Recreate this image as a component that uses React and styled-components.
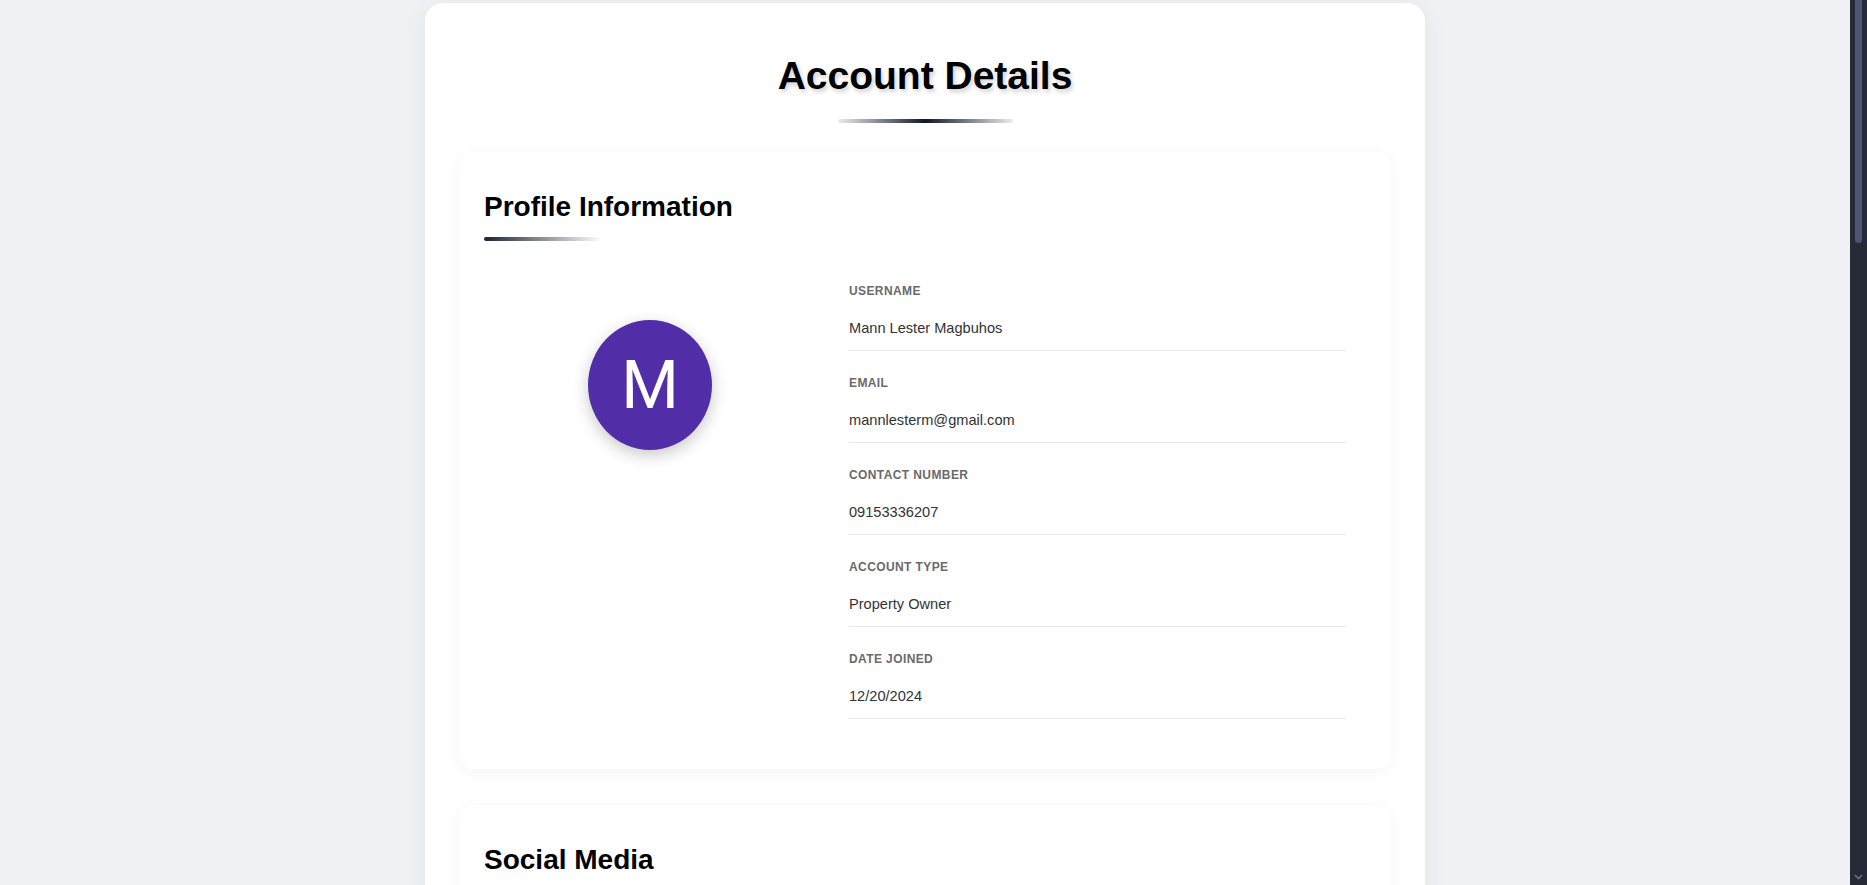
import React from 'react';
import styled, { createGlobalStyle } from 'styled-components';

const GlobalStyle = createGlobalStyle`
  html, body {
    margin: 0;
    padding: 0;
    background: #eff1f5;
    font-family: "Liberation Sans", Arial, sans-serif;
    overflow: hidden;
  }
`;

const Layout = styled.div`
  display: flex;
  height: 100vh;
`;

const Viewport = styled.main`
  flex: 1;
  overflow: hidden;
  padding-top: 3px;
`;

const ScrollTrack = styled.aside`
  width: 17px;
  flex: 0 0 17px;
  background: #262a37;
  display: flex;
  flex-direction: column;
  align-items: center;
  justify-content: space-between;
`;

const ScrollThumb = styled.div`
  width: 7px;
  height: 243px;
  border-radius: 0 0 4px 4px;
  background: #4f5572;
`;

const ScrollArrow = styled.svg`
  width: 9px;
  height: 6px;
  margin-bottom: 5px;
`;

const Container = styled.div`
  width: 1000px;
  margin: 0 auto;
  box-sizing: border-box;
  background: #ffffff;
  border-radius: 18px;
  box-shadow: 0 4px 24px rgba(0, 0, 0, 0.06);
  padding: 49px 34px 40px;
`;

const Title = styled.h1`
  margin: 0;
  text-align: center;
  font-size: 39px;
  line-height: 48px;
  font-weight: 700;
  color: #000;
  text-shadow: 2px 3px 4px rgba(0, 0, 0, 0.18);
`;

const TitleBar = styled.div`
  width: 175px;
  height: 4px;
  margin: 19px auto 29px;
  border-radius: 2px;
  background: linear-gradient(90deg, rgba(15, 23, 42, 0.08), #0f172a 50%, rgba(15, 23, 42, 0.08));
`;

const Section = styled.section`
  background: #ffffff;
  border-radius: 14px;
  box-shadow: 0 3px 16px rgba(0, 0, 0, 0.045);
  padding: 38px 45px 25px 25px;
  & + & {
    margin-top: 36px;
  }
`;

const SectionTitle = styled.h2`
  margin: 0;
  font-size: 28px;
  line-height: 34px;
  font-weight: 700;
  color: #000;
`;

const SectionBar = styled.div`
  width: 118px;
  height: 4px;
  margin-top: 13px;
  border-radius: 2px;
  background: linear-gradient(90deg, #1c2333, rgba(28, 35, 51, 0));
`;

const ProfileGrid = styled.div`
  display: grid;
  grid-template-columns: 332px 1fr;
  column-gap: 33px;
  margin-top: 43px;
`;

const AvatarColumn = styled.div`
  display: flex;
  justify-content: center;
  align-items: flex-start;
  padding-top: 36px;
`;

const Avatar = styled.div`
  width: 124px;
  height: 130px;
  border-radius: 50%;
  background: #512da8;
  color: #ffffff;
  display: flex;
  align-items: center;
  justify-content: center;
  font-family: Roboto, "Liberation Sans", sans-serif;
  font-size: 66px;
  font-weight: 400;
  box-shadow: 0 5px 16px rgba(0, 0, 0, 0.22);
`;

const Fields = styled.div`
  display: flex;
  flex-direction: column;
`;

const Field = styled.div`
  padding-bottom: 12px;
  margin-bottom: 25px;
  border-bottom: 1px solid #e9e9ec;
`;

const Label = styled.div`
  font-size: 12px;
  line-height: 14px;
  font-weight: 700;
  letter-spacing: 0.4px;
  text-transform: uppercase;
  color: #6a6a6a;
`;

const Value = styled.div`
  margin-top: 20px;
  font-size: 14.6px;
  line-height: 20px;
  color: #333333;
`;

const profile = [
  { label: 'Username', value: 'Mann Lester Magbuhos' },
  { label: 'Email', value: 'mannlesterm@gmail.com' },
  { label: 'Contact Number', value: '09153336207' },
  { label: 'Account Type', value: 'Property Owner' },
  { label: 'Date Joined', value: '12/20/2024' },
];

const social = [
  { label: 'Facebook', value: 'Not provided' },
  { label: 'Instagram', value: 'Not provided' },
  { label: 'Twitter', value: 'Not provided' },
];

const App = () => {
  return (
    <Layout>
      <GlobalStyle />
      <Viewport>
        <Container>
          <Title>Account Details</Title>
          <TitleBar />

          <Section>
            <SectionTitle>Profile Information</SectionTitle>
            <SectionBar />
            <ProfileGrid>
              <AvatarColumn>
                <Avatar>M</Avatar>
              </AvatarColumn>
              <Fields>
                {profile.map(item => (
                  <Field key={item.label}>
                    <Label>{item.label}</Label>
                    <Value>{item.value}</Value>
                  </Field>
                ))}
              </Fields>
            </ProfileGrid>
          </Section>

          <Section>
            <SectionTitle>Social Media</SectionTitle>
            <SectionBar />
            <ProfileGrid>
              <div />
              <Fields>
                {social.map(item => (
                  <Field key={item.label}>
                    <Label>{item.label}</Label>
                    <Value>{item.value}</Value>
                  </Field>
                ))}
              </Fields>
            </ProfileGrid>
          </Section>
        </Container>
      </Viewport>
      <ScrollTrack>
        <ScrollThumb />
        <ScrollArrow viewBox="0 0 9 6">
          <path d="M1 1 L4.5 4.5 L8 1" fill="none" stroke="#6b7088" strokeWidth="1.6" />
        </ScrollArrow>
      </ScrollTrack>
    </Layout>
  );
};

export default App;
